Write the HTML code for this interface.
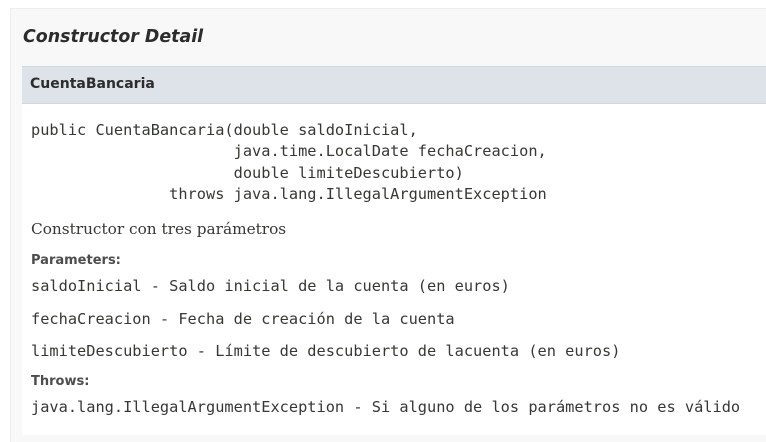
<!DOCTYPE html>
<html style="overflow:hidden;width:766px;height:442px"><head><meta charset="utf-8"><style>
body{margin:0;background:#fff;width:766px;height:442px;overflow:hidden;position:relative}
.outer{position:absolute;left:10px;top:8px;width:755px;height:433px;border-right:0;border-bottom:0;background:#f8f8f8;border-top:1px solid #ededed;border-left:1px solid #ededed;overflow:hidden}
h3{position:absolute;left:12px;top:18px;margin:0;font:italic bold 17.4px "DejaVu Sans",sans-serif;color:#2c2c2c}
.bar{position:absolute;left:11px;top:57px;width:760px;height:36px;background:#dee3e9;border-top:1px solid #d0d9e0;border-bottom:1px solid #d0d9e0}
.bar span{position:absolute;left:8px;top:9px;font:bold 14px "DejaVu Sans",sans-serif;color:#2c2c2c}
.body{position:absolute;left:11px;top:95px;width:760px;height:331px;background:#fff}
.t{position:absolute;left:9px;margin:0;white-space:pre;color:#353833}
.m{font:15.3px "DejaVu Sans Mono",monospace}
pre.m{line-height:21.3px}
.s{font:15.3px "DejaVu Serif",serif}
.b{font:bold 13px "DejaVu Sans",sans-serif;color:#4d4d4d}
</style></head><body>
<div class="outer">
<h3>Constructor Detail</h3>
<div class="bar"><span>CuentaBancaria</span></div>
<div class="body">
<pre class="t m" style="top:16px">public CuentaBancaria(double saldoInicial,
                      java.time.LocalDate fechaCreacion,
                      double limiteDescubierto)
               throws java.lang.IllegalArgumentException</pre>
<div class="t s" style="top:116px">Constructor con tres parámetros</div>
<div class="t b" style="top:149px">Parameters:</div>
<div class="t m" style="top:173px">saldoInicial - Saldo inicial de la cuenta (en euros)</div>
<div class="t m" style="top:206px">fechaCreacion - Fecha de creación de la cuenta</div>
<div class="t m" style="top:238px">limiteDescubierto - Límite de descubierto de lacuenta (en euros)</div>
<div class="t b" style="top:270px">Throws:</div>
<div class="t m" style="top:294px">java.lang.IllegalArgumentException - Si alguno de los parámetros no es válido</div>
</div>
</div>
</body></html>
